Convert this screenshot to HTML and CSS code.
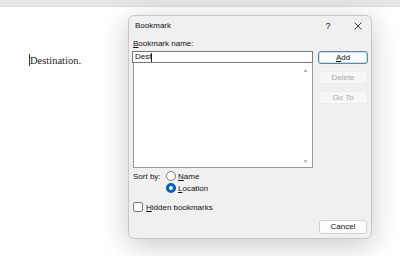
FILE: index.html
```html
<!DOCTYPE html>
<html lang="en">
<head>
    <meta charset="UTF-8">
    <title>Bookmark</title>
    <link rel="stylesheet" href="styles.css">
</head>
<body>
<div class="topbar"></div>

<!-- Document behind the dialog -->
<div class="page">
    <p class="doc-text"><span class="caret"></span>Destination.</p>
</div>

<!-- Bookmark dialog -->
<div class="dialog">
    <div class="titlebar">
        <span class="title">Bookmark</span>
        <span class="help">?</span>
        <span class="close">
            <svg width="8" height="8" viewBox="0 0 8 8"><path d="M0.5 0.5L7.5 7.5M7.5 0.5L0.5 7.5" stroke="#222" stroke-width="0.9" fill="none"/></svg>
        </span>
    </div>
    <div class="content">
        <div class="left">
            <div class="label"><u>B</u>ookmark name:</div>
            <div class="name-input">Dest<span class="text-caret"></span></div>
            <div class="list">
                <span class="arrow up">&#9650;</span>
                <span class="arrow down">&#9660;</span>
            </div>
        </div>
        <div class="right">
            <div class="btn primary"><u>A</u>dd</div>
            <div class="btn disabled">Delete</div>
            <div class="btn disabled">Go To</div>
        </div>
    </div>
    <div class="sort">
        <div class="sort-row">
            <span class="sort-label">Sort by:</span>
            <span class="radio"></span>
            <span><u>N</u>ame</span>
        </div>
        <div class="sort-row indent">
            <span class="radio checked"></span>
            <span><u>L</u>ocation</span>
        </div>
    </div>
    <div class="check-row">
        <span class="checkbox"></span>
        <span><u>H</u>idden bookmarks</span>
    </div>
    <div class="footer">
        <div class="btn cancel">Cancel</div>
    </div>
</div>
</body>
</html>
```

FILE: styles.css
```css
body {
    margin: 0;
    background: #fff;
    font-family: "Liberation Sans", Arial, sans-serif;
    font-size: 8px;
    color: #111;
    overflow: hidden;
}
u {
    text-decoration: underline;
    text-underline-offset: 1px;
}
.topbar {
    height: 6px;
    background: #e6e6e6;
    border-bottom: 1px solid #dadada;
}
.page {
    padding: 47px 0 0 29px;
}
.doc-text {
    margin: 0;
    font-family: "Liberation Serif", serif;
    font-size: 10.5px;
    color: #222;
    display: flex;
    align-items: center;
}
.caret {
    display: inline-block;
    width: 1px;
    height: 12px;
    background: #333;
}
.dialog {
    position: absolute;
    left: 128px;
    top: 15px;
    width: 242px;
    height: 222px;
    background: #f0f0f0;
    border: 1px solid #c8c8c8;
    border-radius: 6px;
    box-shadow: 0 6px 28px rgba(0, 0, 0, 0.22);
    display: flex;
    flex-direction: column;
}
.titlebar {
    height: 19px;
    display: flex;
    align-items: center;
    padding: 0 0 0 6px;
}
.title {
    flex: 1;
}
.help {
    width: 34px;
    text-align: center;
    font-size: 9px;
}
.close {
    width: 26px;
    display: flex;
    justify-content: center;
}
.content {
    display: grid;
    grid-template-columns: 181px 50px;
    column-gap: 5px;
    padding: 3px 0 0 3px;
}
.left {
    display: flex;
    flex-direction: column;
}
.label {
    height: 12px;
    line-height: 12px;
    padding-left: 1px;
    margin-bottom: 1px;
}
.name-input {
    height: 10px;
    line-height: 10px;
    background: #fff;
    border: 1px solid #7a7a7a;
    padding: 0 2px;
    display: flex;
    align-items: center;
}
.text-caret {
    display: inline-block;
    width: 1px;
    height: 9px;
    background: #222;
}
.list {
    position: relative;
    height: 104px;
    background: #fff;
    border: 1px solid #9a9a9a;
    border-top: none;
    margin-left: 1px;
}
.arrow {
    position: absolute;
    right: 4px;
    font-size: 5px;
    color: #a0a0a0;
}
.arrow.up {
    top: 4px;
}
.arrow.down {
    bottom: 3px;
}
.right {
    display: flex;
    flex-direction: column;
    gap: 7px;
    padding-top: 13px;
}
.btn {
    height: 11px;
    line-height: 11px;
    text-align: center;
    border-radius: 3px;
    border: 1px solid #d0d0d0;
    background: #fdfdfd;
}
.btn.primary {
    border: 1px solid #4f8aa6;
    box-shadow: inset 0 0 0 1px #cfe0ea;
    background: #fdfdfd;
}
.btn.disabled {
    background: #f7f7f7;
    border-color: #ececec;
    color: #a8a8a8;
}
.sort {
    margin-top: 2px;
    padding-left: 4px;
}
.sort-row {
    height: 12px;
    display: flex;
    align-items: center;
    gap: 2px;
}
.sort-label {
    width: 31px;
    white-space: nowrap;
}
.sort-row.indent {
    padding-left: 33px;
}
.radio {
    width: 8px;
    height: 8px;
    border: 1px solid #7a7a7a;
    border-radius: 50%;
    background: #fcfcfc;
}
.radio.checked {
    width: 4px;
    height: 4px;
    border: 3px solid #005fb8;
    background: #fff;
}
.check-row {
    margin-top: 7px;
    padding-left: 4px;
    height: 12px;
    display: flex;
    align-items: center;
    gap: 3px;
}
.checkbox {
    width: 8px;
    height: 8px;
    border: 1px solid #7a7a7a;
    border-radius: 2px;
    background: #fcfcfc;
}
.footer {
    flex: 1;
    display: flex;
    justify-content: flex-end;
    align-items: flex-end;
    padding: 0 4px 4px 0;
}
.btn.cancel {
    width: 46px;
    height: 12px;
    line-height: 12px;
    background: #fdfdfd;
}
```
